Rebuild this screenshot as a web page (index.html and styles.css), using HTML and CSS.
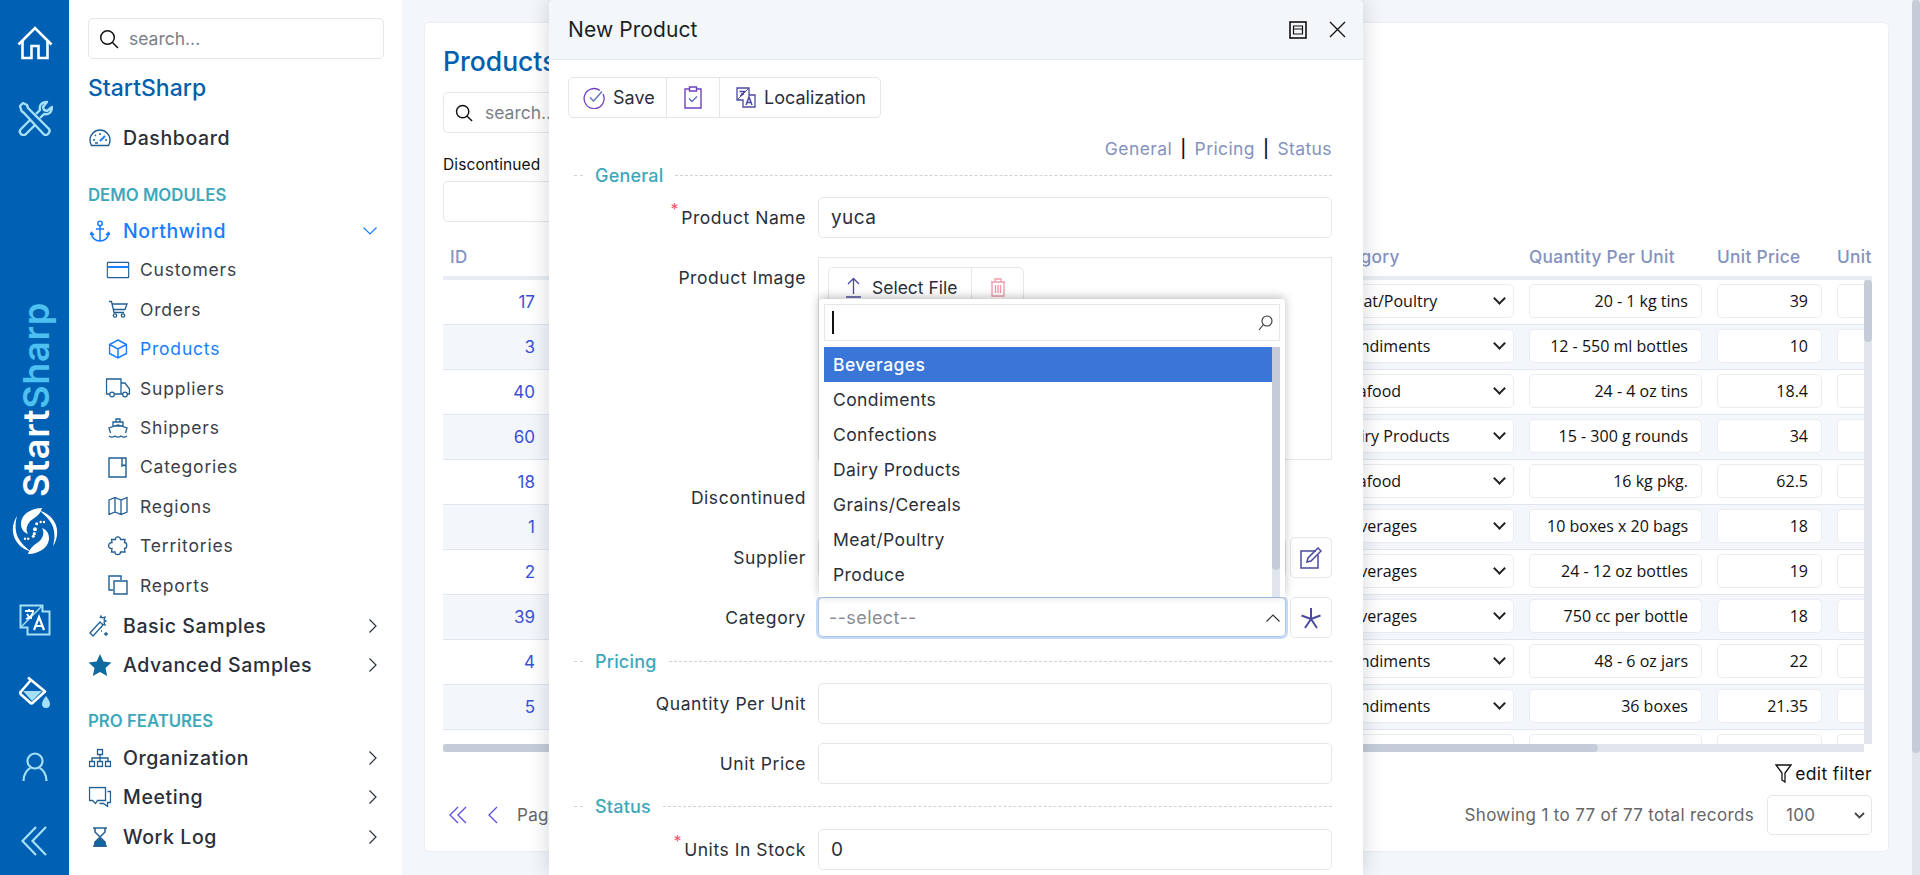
FILE: index.html
```html
<!DOCTYPE html>
<html>
<head>
    <meta charset="utf-8">
    <title>Products - StartSharp</title>
    <link rel="stylesheet" href="styles.css">
</head>
<body>
<div class="app">

    <nav class="rail">
        <svg class="rail-icon" width="36" height="34" viewBox="0 0 36 34" fill="none" stroke="#fff" stroke-width="2.600"><path d="M1.500 18.500 18 2l16.500 16.500"/><path d="M5.500 15v17h9V20h7v12h9V15"/></svg>
        <svg class="rail-icon rail-tools" width="36" height="36" viewBox="0 0 36 36" fill="none" stroke="#a5e0f7" stroke-width="2.400" stroke-linejoin="round"><path d="M3 6l3-3 4 2 1 3 21 21c1.500 2 0 4-1 5s-3 1.500-4.500 0L7 13 4.500 11z"/><path d="M13 20 4 29c-2 2-1 4 0 5s3 2 5 0l9-9"/><path d="M19 14l4-4c-1-4 1-8 7-8l-4 5 1 3 3 1 5-4c0 6-4 8-8 7l-4 4"/></svg>
        <div class="brand-v"><span class="brand-a">Start</span><span class="brand-b">Sharp</span></div>
        <svg class="rail-icon rail-logo" width="46" height="48" viewBox="0 0 46 48" fill="#fff"><path d="M30 1C20 1 9 7 9 17c0 6 4 9 7 10-3-5-1-11 5-15 5-3 8-7 9-11z"/><path d="M16 47c10 0 21-6 21-16 0-6-4-9-7-10 3 5 1 11-5 15-5 3-8 7-9 11z"/><path d="M5 9C1 15-1 24 3 32c3 6 9 11 15 12-7-6-13-12-14-20-1-6 0-11 1-15z"/><path d="M41 39c4-6 6-15 2-23-3-6-9-11-15-12 7 6 13 12 14 20 1 6 0 11-1 15z"/><circle cx="24.700" cy="16.700" r="1.500"/><circle cx="28.700" cy="15" r="1.200"/><circle cx="32" cy="15" r="1.200"/><circle cx="23" cy="22.300" r="2"/><circle cx="22.300" cy="26.700" r="1.600"/><circle cx="13" cy="31.700" r="1.200"/><circle cx="16.300" cy="31.700" r="1.200"/><circle cx="21.300" cy="29.300" r="1.500"/></svg>
        <svg class="rail-icon rail-tr" width="32" height="32" viewBox="0 0 32 32" fill="none" stroke="#a5e0f7" stroke-width="2"><path d="M1.500 1.500h22v6h7v23h-22v-7h-7z"/><path d="M23.500 1.500 1.500 23.500" stroke-width="1.500"/><path d="M6 7h9M10 5v3M14 8c-1 4-4 6-7 7M8 10c1 2 3 4 5 4" stroke="#fff" stroke-width="1.800"/><path d="M15 26l5-13 5 13M17 22h6" stroke="#fff" stroke-width="2.200"/></svg>
        <svg class="rail-icon rail-paint" width="32" height="32" viewBox="0 0 32 32"><path d="M9 1.500l17 14-12 11c-1 1-2 1-3 0l-9-8c-1-1-1-2 0-3L12 4" fill="none" stroke="#fff" stroke-width="2.600" stroke-linejoin="round"/><path d="M4 15h19L13 25z" fill="#a5e0f7"/><path d="M27 20c2 3 4 5 4 8a4 4 0 0 1-8 0c0-3 2-5 4-8z" fill="#a5e0f7"/></svg>
        <svg class="rail-icon rail-user" width="26" height="30" viewBox="0 0 26 30" fill="none" stroke="#a5e0f7" stroke-width="2.200"><circle cx="13" cy="9" r="7.500"/><path d="M1.500 29c0-7 4-12 7-13M24.500 29c0-7-4-12-7-13"/></svg>
        <svg class="rail-icon rail-back" width="26" height="30" viewBox="0 0 26 30" fill="none" stroke="#a5e0f7" stroke-width="2.200"><path d="M15 1 1.500 15 15 29M25 1 11.500 15 25 29"/></svg>
    </nav>

    <aside class="sidebar">
        <div class="side-search">
            <svg width="20" height="20" viewBox="0 0 20 20" fill="none" stroke="#111" stroke-width="1.500"><circle cx="8.500" cy="8.500" r="6.800"/><path d="M13.500 13.500 19 19"/></svg>
            <span>search...</span>
        </div>
        <div class="side-brand">StartSharp</div>

        <a class="nav-top nav-dash">
            <svg width="22" height="20" viewBox="0 0 22 20" fill="none" stroke="#215f95" stroke-width="1.400"><path d="M2.500 17.500C1.500 16 1 14 1 12a10 10 0 0 1 20 0c0 2-.5 4-1.500 5.500z"/><path d="M11 13l5-5" stroke="#1a7dff" stroke-width="2"/><path d="M4 12h2M11 5v2M6 7l1 1M16 12h2M6 15h3"/></svg>
            <span>Dashboard</span>
        </a>

        <div class="nav-head">DEMO MODULES</div>
        <a class="nav-top nav-open">
            <svg width="20" height="22" viewBox="0 0 20 22" fill="none" stroke="#1a7dff" stroke-width="1.500"><circle cx="10" cy="3.500" r="2.200"/><path d="M10 6v15M6 9h8M1.500 13c0 5 4 8 8.500 8s8.500-3 8.500-8M0 15l1.500-2.500L4 15M16 15l2.500-2.500L20 15"/></svg>
            <span>Northwind</span>
            <svg class="chev" width="14" height="8" viewBox="0 0 14 8" fill="none" stroke="#1a7dff" stroke-width="1.200"><path d="M.5.500 7 7 13.500.500"/></svg>
        </a>

        <div class="nav-sub">
            <a>
                <svg width="23" height="17" viewBox="0 0 23 17" fill="none" stroke="#215f95" stroke-width="1.400"><rect x=".7" y=".7" width="21.600" height="15.600" rx="1.500"/><path d="M.7 5.500h21.600" stroke="#1a7dff" stroke-width="1.800"/></svg>
                <span>Customers</span>
            </a>
            <a>
                <svg width="20" height="18" viewBox="0 0 20 18" fill="none" stroke="#215f95" stroke-width="1.300"><path d="M1 1.500h2.500L6 12.500h10M4 4h15l-2 5.500H5.500"/><circle cx="7" cy="15.500" r="1.700"/><circle cx="15" cy="15.500" r="1.700"/></svg>
                <span>Orders</span>
            </a>
            <a class="active">
                <svg width="19" height="20" viewBox="0 0 19 20" fill="none" stroke="#1a7dff" stroke-width="1.500"><path d="M9.500 1 18 5.500v9L9.500 19 1 14.500v-9zM1 5.500l8.500 4.500L18 5.500M9.500 10v9"/></svg>
                <span>Products</span>
            </a>
            <a>
                <svg width="25" height="20" viewBox="0 0 25 20" fill="none" stroke="#215f95" stroke-width="1.300"><path d="M4 16H1V1h14.500v15H9M15.500 5h4l4.500 6v5h-2.500M15.500 16H17"/><circle cx="6.500" cy="16.500" r="2.300"/><circle cx="19.500" cy="16.500" r="2.300"/></svg>
                <span>Suppliers</span>
            </a>
            <a>
                <svg width="20" height="20" viewBox="0 0 20 20" fill="none" stroke="#215f95" stroke-width="1.300"><path d="M8 1h4v3H8zM5 4h10v4H5zM2.500 15 1 10l9-3 9 3-1.500 5M1 18c2 1.500 4 1.500 6 0 2 1.500 4 1.500 6 0 2 1.500 4 1.500 6 0"/></svg>
                <span>Shippers</span>
            </a>
            <a>
                <svg width="20" height="22" viewBox="0 0 20 22" fill="none" stroke="#215f95" stroke-width="1.400"><path d="M1 2h17v19H1zM14 2v8l2-1 2 1"/></svg>
                <span>Categories</span>
            </a>
            <a>
                <svg width="20" height="19" viewBox="0 0 20 19" fill="none" stroke="#215f95" stroke-width="1.300"><path d="M1 3.500 7 1l6 2.500L19 1v14.500L13 18l-6-2.500L1 18zM7 1v14.500M13 3.500V18"/></svg>
                <span>Regions</span>
            </a>
            <a>
                <svg width="21" height="21" viewBox="0 0 21 21" fill="none" stroke="#215f95" stroke-width="1.300"><path d="M8 4C7 1 13 0 13 4h4.500l-.5 3c3 0 3 6 0 6l.5 3.500H13c0 3.500-6 3.500-5.500 0H4L4.500 13c-4.500.5-4.500-6 0-6L4 4z"/></svg>
                <span>Territories</span>
            </a>
            <a>
                <svg width="20" height="20" viewBox="0 0 20 20" fill="none" stroke="#215f95" stroke-width="1.400"><path d="M5 15H1V1h12v4"/><path d="M6 6h13v13H6z"/></svg>
                <span>Reports</span>
            </a>
        </div>

        <a class="nav-top nav-basic">
            <svg width="22" height="22" viewBox="0 0 22 22" fill="none" stroke="#215f95" stroke-width="1.300"><path d="M1 18 11 7l3 3L4 21z"/><path d="M11 3l1-2 1 2 3-1-1 3 2 1-2 1 1 3-3-1"/><path d="M17 17v4M15 19h4M12 16h1"/></svg>
            <span>Basic Samples</span>
            <svg class="chev" width="8" height="14" viewBox="0 0 8 14" fill="none" stroke="#2a3242" stroke-width="1.200"><path d="M.500.500 7 7 .500 13.500"/></svg>
        </a>
        <a class="nav-top nav-adv">
            <svg width="23" height="22" viewBox="0 0 23 22" fill="#0f6a9f"><path d="M11.500 0l3.400 7.500 8.100.900-6 5.500 1.700 8.100-7.200-4.100L4.300 22 6 13.900 0 8.400l8.100-.9z"/></svg>
            <span>Advanced Samples</span>
            <svg class="chev" width="8" height="14" viewBox="0 0 8 14" fill="none" stroke="#2a3242" stroke-width="1.200"><path d="M.500.500 7 7 .500 13.500"/></svg>
        </a>

        <div class="nav-head nav-head-pro">PRO FEATURES</div>
        <a class="nav-top">
            <svg width="23" height="19" viewBox="0 0 23 19" fill="none" stroke="#215f95" stroke-width="1.300"><path d="M9 1h5v5H9zM1 13h5v5H1zM9 13h5v5H9zM17 13h5v5h-5zM11.500 6v7M3.500 13V9.500h16V13"/></svg>
            <span>Organization</span>
            <svg class="chev" width="8" height="14" viewBox="0 0 8 14" fill="none" stroke="#2a3242" stroke-width="1.200"><path d="M.500.500 7 7 .500 13.500"/></svg>
        </a>
        <a class="nav-top">
            <svg width="23" height="21" viewBox="0 0 23 21" fill="none" stroke="#215f95" stroke-width="1.300"><path d="M17 1H1v13h3l3 3 2-3h8zM19 5h3v11h-3v4l-4-3h-4"/></svg>
            <span>Meeting</span>
            <svg class="chev" width="8" height="14" viewBox="0 0 8 14" fill="none" stroke="#2a3242" stroke-width="1.200"><path d="M.500.500 7 7 .500 13.500"/></svg>
        </a>
        <a class="nav-top">
            <svg width="16" height="20" viewBox="0 0 16 20" fill="none" stroke="#215f95" stroke-width="1.500"><path d="M1 1h14M1 19h14M3 1v4l5 5 5-5V1M3 19v-4l5-5 5 5v4"/><path d="M3 19v-3l5-4 5 4v3z" fill="#0f6a9f"/></svg>
            <span>Work Log</span>
            <svg class="chev" width="8" height="14" viewBox="0 0 8 14" fill="none" stroke="#2a3242" stroke-width="1.200"><path d="M.500.500 7 7 .500 13.500"/></svg>
        </a>
    </aside>

    <main class="main">
        <section class="card">
            <h1 class="page-title">Products</h1>
            <div class="grid-search">
                <svg width="18" height="18" viewBox="0 0 20 20" fill="none" stroke="#111" stroke-width="1.600"><circle cx="8.500" cy="8.500" r="6.800"/><path d="M13.500 13.500 19 19"/></svg>
                <span>search...</span>
            </div>
            <div class="filter-label">Discontinued</div>
            <div class="filter-box"></div>

            <div class="grid">
                <div class="grid-view">
                    <div class="row row-head">
                        <div class="col-id head-id">ID</div>
                        <div class="col-fill"></div>
                        <div class="col-cat">Category</div>
                        <div class="col-qty">Quantity Per Unit</div>
                        <div class="col-price">Unit Price</div>
                        <div class="col-unit">Unit</div>
                    </div>
                    <div class="rows">
                        <div class="row"><a class="col-id">17</a><div class="col-fill"></div><div class="col-cat cell cell-sel">Meat/Poultry</div><div class="col-qty cell">20 - 1 kg tins</div><div class="col-price cell">39</div><div class="col-unit cell"></div></div>
                        <div class="row"><a class="col-id">3</a><div class="col-fill"></div><div class="col-cat cell cell-sel">Condiments</div><div class="col-qty cell">12 - 550 ml bottles</div><div class="col-price cell">10</div><div class="col-unit cell"></div></div>
                        <div class="row"><a class="col-id">40</a><div class="col-fill"></div><div class="col-cat cell cell-sel">Seafood</div><div class="col-qty cell">24 - 4 oz tins</div><div class="col-price cell">18.4</div><div class="col-unit cell"></div></div>
                        <div class="row"><a class="col-id">60</a><div class="col-fill"></div><div class="col-cat cell cell-sel">Dairy Products</div><div class="col-qty cell">15 - 300 g rounds</div><div class="col-price cell">34</div><div class="col-unit cell"></div></div>
                        <div class="row"><a class="col-id">18</a><div class="col-fill"></div><div class="col-cat cell cell-sel">Seafood</div><div class="col-qty cell">16 kg pkg.</div><div class="col-price cell">62.5</div><div class="col-unit cell"></div></div>
                        <div class="row"><a class="col-id">1</a><div class="col-fill"></div><div class="col-cat cell cell-sel">Beverages</div><div class="col-qty cell">10 boxes x 20 bags</div><div class="col-price cell">18</div><div class="col-unit cell"></div></div>
                        <div class="row"><a class="col-id">2</a><div class="col-fill"></div><div class="col-cat cell cell-sel">Beverages</div><div class="col-qty cell">24 - 12 oz bottles</div><div class="col-price cell">19</div><div class="col-unit cell"></div></div>
                        <div class="row"><a class="col-id">39</a><div class="col-fill"></div><div class="col-cat cell cell-sel">Beverages</div><div class="col-qty cell">750 cc per bottle</div><div class="col-price cell">18</div><div class="col-unit cell"></div></div>
                        <div class="row"><a class="col-id">4</a><div class="col-fill"></div><div class="col-cat cell cell-sel">Condiments</div><div class="col-qty cell">48 - 6 oz jars</div><div class="col-price cell">22</div><div class="col-unit cell"></div></div>
                        <div class="row"><a class="col-id">5</a><div class="col-fill"></div><div class="col-cat cell cell-sel">Condiments</div><div class="col-qty cell">36 boxes</div><div class="col-price cell">21.35</div><div class="col-unit cell"></div></div>
                        <div class="row"><div class="col-id"></div><div class="col-fill"></div><div class="col-cat cell"></div><div class="col-qty cell"></div><div class="col-price cell"></div><div class="col-unit cell"></div></div>
                    </div>
                    <div class="hscroll"><div class="hthumb"></div></div>
                </div>
                <div class="vscroll"><div class="vthumb"></div></div>
            </div>

            <div class="edit-filter">
                <svg width="17" height="19" viewBox="0 0 17 19" fill="none" stroke="#111" stroke-width="1.300"><path d="M1 1h15l-6 8v9l-3-2V9z"/></svg>
                <span>edit filter</span>
            </div>
            <div class="pager">
                <svg class="pg-first" width="18" height="18" viewBox="0 0 18 18" fill="none" stroke="#5b4ee6" stroke-width="1.300"><path d="M9 1 1 9l8 8M17 1 9 9l8 8"/></svg>
                <svg class="pg-prev" width="11" height="18" viewBox="0 0 11 18" fill="none" stroke="#5b4ee6" stroke-width="1.300"><path d="M10 1 2 9l8 8"/></svg>
                <span class="pg-text">Page</span>
                <span class="pg-count">Showing 1 to 77 of 77 total records</span>
                <div class="pg-size">100<svg width="11" height="7" viewBox="0 0 11 7" fill="none" stroke="#444" stroke-width="1.800"><path d="M1 1l4.500 4.500L10 1"/></svg></div>
            </div>
        </section>
    </main>

    <div class="pagebar"><div class="pagethumb"></div></div>

    <div class="modal">
        <header class="modal-head">
            <span class="modal-title">New Product</span>
            <svg class="modal-max" width="18" height="18" viewBox="0 0 18 18" fill="none" stroke="#111"><rect x="1" y="1" width="16" height="16" stroke-width="1.600"/><path d="M4.500 5h9v8h-9zM4.500 8h9" stroke-width="1.200"/></svg>
            <svg class="modal-close" width="17" height="17" viewBox="0 0 17 17" fill="none" stroke="#111" stroke-width="1.300"><path d="M1 1l15 15M16 1 1 16"/></svg>
        </header>

        <div class="modal-body">
            <div class="toolbar">
                <div class="tool tool-save">
                    <svg width="22" height="22" viewBox="0 0 22 22" fill="none" stroke="#6f42c1" stroke-width="1.300"><path d="M20 7a10 10 0 1 1-3-3.500"/><path d="M7 10.500l3.500 3.500L19 4.500" stroke="#5a6fc0"/></svg>
                    <span>Save</span>
                </div>
                <div class="tool tool-apply">
                    <svg width="18" height="23" viewBox="0 0 18 23" fill="none" stroke="#6f42c1" stroke-width="1.400"><path d="M5.500 3H1v19h16V3h-4.500M5.500 1h7v4h-7z"/><path d="M5 12.500l3 3 5-5" stroke="#5a6fc0"/></svg>
                </div>
                <div class="tool tool-loc">
                    <svg width="20" height="21" viewBox="0 0 20 21" fill="none" stroke="#4b4aa0" stroke-width="1.300"><path d="M1 1h12v7h6v12H7v-7H1z"/><path d="M13 1 1 13" stroke-width="1"/><path d="M3.500 4.500h6M5 7h3M8 4.500c-.5 2.500-2 4-4 4.500" stroke-width="1.300"/><path d="M10 18l3-8 3 8M11 15.500h4" stroke-width="1.500"/></svg>
                    <span>Localization</span>
                </div>
            </div>

            <div class="tab-links">
                <a>General</a><i>|</i><a>Pricing</a><i>|</i><a>Status</a>
            </div>

            <div class="section section-general"><span>General</span></div>

            <div class="frow frow-name">
                <label><sup>*</sup>Product Name</label>
                <div class="input">yuca</div>
            </div>

            <div class="frow frow-image">
                <label>Product Image</label>
                <div class="image-box">
                    <div class="file-btns">
                        <div class="file-select">
                            <svg width="15" height="21" viewBox="0 0 15 21" fill="none" stroke="#4b4aa0" stroke-width="1.300"><path d="M7.500 17V1.500M2 7l5.500-5.500L13 7M0 20h15"/></svg>
                            <span>Select File</span>
                        </div>
                        <div class="file-del">
                            <svg width="16" height="19" viewBox="0 0 16 19" fill="none" stroke="#ee9aa8" stroke-width="1.300"><path d="M1 4h14M5 4V1h6v3M2 4v14h12V4M5.500 7v8M8 7v8M10.500 7v8"/></svg>
                        </div>
                    </div>
                </div>
            </div>

            <div class="frow frow-disc">
                <label>Discontinued</label>
                <div></div>
            </div>

            <div class="frow frow-sup">
                <label>Supplier</label>
                <div class="combo-row">
                    <div class="input combo"></div>
                    <div class="icon-btn">
                        <svg width="22" height="22" viewBox="0 0 22 22" fill="none" stroke="#4b4aa0" stroke-width="1.500"><path d="M16 4H1v17h17V8"/><path d="M7 15l1-4L18 1l3 3-10 10z"/></svg>
                    </div>
                </div>
            </div>

            <div class="frow frow-cat">
                <label>Category</label>
                <div class="combo-row">
                    <div class="input combo combo-open">
                        <span class="placeholder">--select--</span>
                        <svg class="combo-arrow" width="14" height="8" viewBox="0 0 14 8" fill="none" stroke="#333" stroke-width="1.200"><path d="M.5 7.500 7 1l6.500 6.500"/></svg>
                        <div class="drop">
                            <div class="drop-search">
                                <span class="caret"></span>
                                <svg width="15" height="16" viewBox="0 0 15 16" fill="none" stroke="#333" stroke-width="1.100"><circle cx="9" cy="6" r="5"/><path d="M5.500 9.500 1 15"/></svg>
                            </div>
                            <div class="drop-list">
                                <div class="drop-items">
                                    <div class="drop-item selected">Beverages</div>
                                    <div class="drop-item">Condiments</div>
                                    <div class="drop-item">Confections</div>
                                    <div class="drop-item">Dairy Products</div>
                                    <div class="drop-item">Grains/Cereals</div>
                                    <div class="drop-item">Meat/Poultry</div>
                                    <div class="drop-item">Produce</div>
                                </div>
                                <div class="drop-bar"><div class="drop-thumb"></div></div>
                            </div>
                        </div>
                    </div>
                    <div class="icon-btn">
                        <svg width="22" height="22" viewBox="0 0 22 22" fill="none" stroke="#4b4aa0" stroke-width="2"><path d="M11 1v11M11 12 1.500 8.500M11 12l9.500-3.500M11 12l-6 9M11 12l6 9"/></svg>
                    </div>
                </div>
            </div>

            <div class="section section-pricing"><span>Pricing</span></div>

            <div class="frow frow-qty">
                <label>Quantity Per Unit</label>
                <div class="input"></div>
            </div>
            <div class="frow frow-price">
                <label>Unit Price</label>
                <div class="input"></div>
            </div>

            <div class="section section-status"><span>Status</span></div>

            <div class="frow frow-stock">
                <label><sup>*</sup>Units In Stock</label>
                <div class="input">0</div>
            </div>
        </div>
    </div>
</div>
</body>
</html>
```

FILE: styles.css
```css
* {
    box-sizing: border-box;
}

html, body {
    height: 100%;
    margin: 0;
    overflow: hidden;
}

body {
    font-family: Inter, "Noto Sans", sans-serif;
    color: #2a2f3a;
    background-color: #f3f6fa;
}

svg {
    display: block;
    flex: none;
}

.app {
    position: relative;
    display: flex;
    height: 875px;
    overflow: hidden;
}

/* left rail */
.rail {
    display: flex;
    flex-direction: column;
    align-items: center;
    flex: none;
    width: 69px;
    padding-top: 26px;
    background-color: #0060b3;
}

.rail-tools {
    margin-top: 40px;
}

.brand-v {
    margin-top: 166px;
    margin-left: 3px;
    writing-mode: vertical-rl;
    transform: rotate(180deg);
    font-size: 36px;
    line-height: 40px;
    font-weight: 600;
    letter-spacing: .7px;
}

.brand-a {
    color: #fff;
}

.brand-b {
    color: #4cc0ee;
}

.rail-logo {
    margin-top: 10px;
}

.rail-tr {
    margin-top: 49px;
}

.rail-paint {
    margin-top: 40px;
}

.rail-user {
    margin-top: 44px;
}

.rail-back {
    margin-top: 44px;
    margin-left: -2px;
}

/* menu */
.sidebar {
    flex: none;
    width: 333px;
    padding: 18px 18px 0 19px;
    background-color: #fff;
}

.side-search {
    display: flex;
    align-items: center;
    gap: 10px;
    height: 41px;
    padding-left: 10px;
    border: 1px solid #e3e6ea;
    border-radius: 5px;
    font-size: 17.5px;
    color: #7b7f86;
}

.side-brand {
    margin-top: 16px;
    font-size: 23px;
    line-height: 26px;
    font-weight: 500;
    color: #0060ac;
}

.sidebar a {
    display: flex;
    align-items: center;
}

.nav-top {
    position: relative;
    height: 39.4px;
    font-size: 19.5px;
    font-weight: 500;
    letter-spacing: .6px;
    color: #2a2f3a;
}

.nav-top > svg:first-child {
    position: absolute;
    left: 12px;
    top: 50%;
    transform: translate(-50%, -50%);
}

.nav-top > span {
    margin-left: 35px;
}

.nav-dash {
    margin-top: 17px;
}

.nav-open {
    color: #1a7dff;
}

.chev {
    margin-left: auto;
    margin-right: 7px;
}

.nav-head {
    margin: 28px 0 5.5px;
    font-size: 16.8px;
    line-height: 20px;
    font-weight: 600;
    color: #3ea8ba;
}

.nav-head-pro {
    margin-top: 27px;
    margin-bottom: 7px;
}

.nav-sub a {
    position: relative;
    height: 39.4px;
    font-size: 17.5px;
    letter-spacing: .8px;
    color: #3a3f4a;
}

.nav-sub a > svg {
    position: absolute;
    left: 30px;
    top: 50%;
    transform: translate(-50%, -50%);
}

.nav-sub a > span {
    margin-left: 52px;
}

.nav-sub .active {
    color: #1a7dff;
}

.nav-basic {
    margin-top: 1.5px;
}

.nav-adv {
    height: 38.5px;
}

/* page */
.main {
    flex: 1;
    padding: 22px 31px 0 22px;
}

.card {
    height: 830px;
    padding: 20px 16px 0 18px;
    background-color: #fff;
    border: 1px solid #eceff3;
    border-radius: 5px;
}

.page-title {
    margin: 0;
    font-size: 26.5px;
    line-height: 36px;
    font-weight: 500;
    color: #0060ac;
}

.grid-search {
    display: flex;
    align-items: center;
    gap: 12px;
    width: 300px;
    height: 41px;
    margin-top: 13px;
    padding-left: 11px;
    border: 1px solid #e3e6ea;
    border-radius: 5px;
    font-size: 17.5px;
    color: #7b7f86;
}

.filter-label {
    margin-top: 22px;
    font-size: 15.5px;
    line-height: 20px;
    letter-spacing: .1px;
    color: #111;
}

.filter-box {
    width: 200px;
    height: 41px;
    margin-top: 6px;
    border: 1px solid #e3e6ea;
    border-radius: 5px;
}

.grid {
    display: flex;
    height: 530px;
}

.grid-view {
    display: flex;
    flex-direction: column;
    flex: none;
    width: 1421px;
    height: 530px;
}

.row {
    display: flex;
    align-items: center;
    flex: none;
    height: 45px;
    border-bottom: 1px solid #e1e6ee;
    font-family: "Open Sans", sans-serif;
    font-size: 16px;
    color: #111;
}

.rows .row:nth-child(even) {
    background-color: #f3f6fa;
}

.row-head {
    height: 58px;
    margin-right: -8px;
    padding-top: 15px;
    border-bottom: 4px solid #e9edf3;
    font-family: Inter, sans-serif;
    font-size: 17.3px;
    font-weight: 500;
    letter-spacing: .3px;
    color: #8492bd;
    white-space: nowrap;
}

.rows {
    flex: 1;
    min-height: 0;
    overflow: hidden;
}

.col-id {
    flex: none;
    width: 92px;
    font-family: Inter, sans-serif;
    font-size: 17px;
    text-align: right;
    color: #3b50d6;
}

.head-id {
    padding-left: 7px;
    text-align: left;
    color: #8492bd;
}

.col-fill {
    flex: 1;
}

.col-cat {
    flex: none;
    width: 185px;
}

.row-head .col-cat {
    margin-left: -8px;
    margin-right: 8px;
}

.col-qty {
    flex: none;
    width: 173px;
    margin-left: 15px;
}

.col-price {
    flex: none;
    width: 105px;
    margin-left: 15px;
}

.col-unit {
    flex: none;
    width: 27px;
    margin-left: 15px;
}

.row-head .col-unit {
    width: 35px;
}

.cell {
    height: 34px;
    margin-bottom: 2px;
    padding: 0 13px;
    line-height: 32px;
    background-color: #fff;
    border: 1px solid #e9ecf0;
    border-radius: 5px;
    text-align: right;
    white-space: nowrap;
    overflow: hidden;
}

.cell-sel {
    position: relative;
    padding-left: 10px;
    text-align: left;
}

.cell-sel::after {
    content: "";
    position: absolute;
    right: 9px;
    top: 9px;
    width: 7px;
    height: 7px;
    border-right: 2px solid #222;
    border-bottom: 2px solid #222;
    transform: rotate(45deg);
}

.col-unit.cell {
    border-right: 0;
    border-radius: 5px 0 0 5px;
}

.hscroll {
    flex: none;
    height: 8px;
    background-color: #e1e6ee;
}

.hthumb {
    width: 1155px;
    height: 8px;
    background-color: #c5ccd8;
    border-radius: 4px;
}

.vscroll {
    flex: none;
    width: 8px;
    height: 464px;
    margin-top: 58px;
    background-color: #e1e6ee;
}

.vthumb {
    height: 62px;
    background-color: #c5ccd8;
    border-radius: 4px;
}

.edit-filter {
    display: flex;
    justify-content: flex-end;
    align-items: center;
    gap: 3px;
    height: 22px;
    margin-top: 10px;
    font-size: 17.5px;
    letter-spacing: .3px;
    color: #111;
}

.pager {
    display: flex;
    align-items: center;
    height: 40px;
    margin-top: 11px;
    padding-left: 6px;
    font-size: 17px;
    letter-spacing: .35px;
    color: #666;
}

.pg-prev {
    margin-left: 20px;
}

.pg-text {
    margin-left: 19px;
}

.pg-count {
    margin-left: auto;
}

.pg-size {
    display: flex;
    align-items: center;
    justify-content: space-between;
    width: 105px;
    height: 40px;
    margin-left: 13px;
    padding: 0 6px 0 18px;
    border: 1px solid #e3e6ea;
    border-radius: 5px;
}

.pagebar {
    position: absolute;
    right: 0;
    top: 0;
    width: 8px;
    height: 875px;
    background-color: #e1e6ee;
}

.pagethumb {
    height: 753px;
    background-color: #c5ccd8;
    border-radius: 4px;
}

/* dialog */
.modal {
    position: absolute;
    left: 549px;
    top: 0;
    width: 814px;
    height: 875px;
    background-color: #fff;
    border-radius: 5px 5px 0 0;
    box-shadow: 0 0 22px rgba(40, 50, 70, .2);
    overflow: hidden;
}

.modal-head {
    display: flex;
    align-items: center;
    height: 60px;
    padding: 0 17px 0 19px;
    background-color: #f4f7fa;
    border-bottom: 1px solid #e6e9ee;
}

.modal-title {
    font-size: 21px;
    letter-spacing: .1px;
    color: #1c1f26;
}

.modal-max {
    margin-left: auto;
}

.modal-close {
    margin-left: 22px;
}

.modal-body {
    padding: 17px 31px 0 19px;
}

.toolbar {
    display: inline-flex;
    height: 41px;
    border: 1px solid #e3e6ea;
    border-radius: 5px;
    font-size: 18px;
    color: #2a2f3a;
    vertical-align: top;
}

.tool {
    display: flex;
    align-items: center;
    gap: 8px;
    height: 100%;
    border-left: 1px solid #e3e6ea;
}

.tool-save {
    width: 97px;
    padding-left: 14px;
    border-left: 0;
}

.tool-apply {
    width: 53px;
    justify-content: center;
}

.tool-loc {
    width: 161px;
    padding-left: 16px;
}

.tab-links {
    display: flex;
    justify-content: flex-end;
    gap: 8px;
    height: 20px;
    margin-top: 21px;
    font-size: 17.5px;
    line-height: 20px;
    letter-spacing: .4px;
}

.tab-links a {
    color: #8492bd;
}

.tab-links i {
    font-style: normal;
    font-weight: 500;
    color: #111;
}

.section {
    display: flex;
    align-items: center;
    height: 20px;
    padding-left: 6px;
    font-size: 18px;
    font-weight: 500;
    letter-spacing: .2px;
    color: #3ea8ba;
}

.section::before {
    content: "";
    width: 9px;
    border-top: 1px dashed #cfd3d9;
    margin-right: 12px;
}

.section::after {
    content: "";
    flex: 1;
    border-top: 1px dashed #cfd3d9;
    margin-left: 12px;
}

.section-general {
    margin-top: 6px;
}

.section-pricing {
    margin-top: 13px;
}

.section-status {
    margin-top: 12px;
}

.frow {
    display: grid;
    grid-template-columns: 238px 514px;
    column-gap: 12px;
}

.frow label {
    display: flex;
    justify-content: flex-end;
    align-items: center;
    height: 40px;
    font-size: 17.5px;
    letter-spacing: .55px;
    color: #2a2f3a;
}

.frow sup {
    align-self: flex-start;
    margin: 2px 2px 0 0;
    font-size: 16px;
    line-height: 20px;
    color: #f2556e;
}

.input {
    height: 41px;
    padding: 0 12px;
    border: 1px solid #e3e6ea;
    border-radius: 5px;
    font-size: 19px;
    line-height: 39px;
    letter-spacing: .4px;
    color: #2a2f3a;
}

.frow-name {
    margin-top: 12px;
}

.frow-image {
    margin-top: 19px;
}

.image-box {
    height: 203px;
    padding: 9px;
    border: 1px solid #e3e6ea;
}

.file-btns {
    display: inline-flex;
    height: 41px;
    border: 1px solid #e3e6ea;
    border-radius: 5px;
    font-size: 17.5px;
}

.file-select {
    display: flex;
    align-items: center;
    gap: 11px;
    width: 142px;
    padding-left: 17px;
}

.file-del {
    display: flex;
    align-items: center;
    justify-content: center;
    width: 52px;
    border-left: 1px solid #e3e6ea;
}

.frow-disc {
    height: 40px;
    margin-top: 17px;
}

.frow-sup {
    margin-top: 20px;
}

.frow-cat {
    margin-top: 19px;
}

.combo-row {
    display: flex;
    gap: 4px;
}

.combo {
    flex: none;
    width: 468px;
}

.combo-open {
    position: relative;
    height: 40px;
    padding-left: 10px;
    border-color: #a9c6ec;
    box-shadow: 0 0 0 2px #c6daf3;
}

.placeholder {
    color: #8a8d93;
    font-size: 18px;
}

.combo-arrow {
    position: absolute;
    right: 5px;
    top: 16px;
}

.icon-btn {
    display: flex;
    align-items: center;
    justify-content: center;
    width: 42px;
    height: 41px;
    border: 1px solid #e3e6ea;
    border-radius: 5px;
}

/* open select list */
.drop {
    position: absolute;
    left: 0;
    right: 0;
    bottom: 39px;
    height: 298px;
    padding: 5px 5px 0;
    background-color: #fff;
    border-radius: 3px 3px 0 0;
    box-shadow: 0 -2px 10px rgba(0, 0, 0, .25);
}

.drop-search {
    display: flex;
    align-items: center;
    justify-content: space-between;
    height: 37px;
    padding: 0 6px 0 7px;
    border: 1px solid #e3e6ea;
}

.caret {
    width: 2px;
    height: 23px;
    background-color: #111;
}

.drop-list {
    display: flex;
    height: 250px;
    margin-top: 6px;
}

.drop-items {
    flex: 1;
}

.drop-item {
    height: 35px;
    padding-left: 9px;
    font-size: 17.5px;
    line-height: 35px;
    letter-spacing: .4px;
    color: #2a2f3a;
}

.drop-item.selected {
    background-color: #3a75d8;
    font-weight: 500;
    color: #fff;
}

.drop-bar {
    flex: none;
    width: 8px;
    background-color: #e1e6ee;
}

.drop-thumb {
    height: 223px;
    background-color: #c5ccd8;
    border-radius: 0 0 4px 4px;
}

.frow-qty {
    margin-top: 12px;
}

.frow-price {
    margin-top: 19px;
}

.frow-stock {
    margin-top: 13px;
}
```
